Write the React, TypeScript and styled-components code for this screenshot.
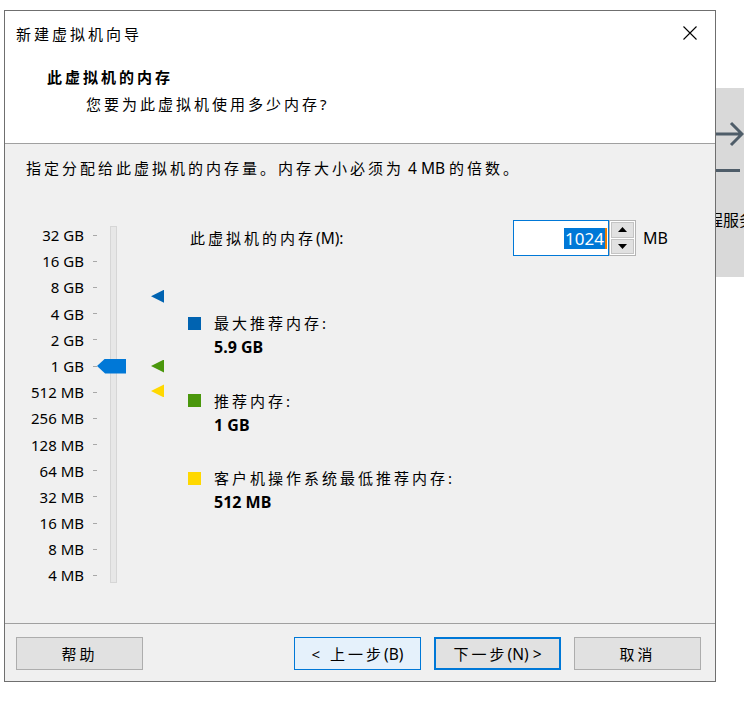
import React from 'react';
import styled, { createGlobalStyle } from 'styled-components';

const GlobalStyle = createGlobalStyle`
  html, body {
    margin: 0;
    padding: 0;
    background: #fff;
  }
  body {
    font-family: "Noto Sans", "Noto Sans CJK SC", sans-serif;
    font-size: 15px;
    color: #000;
  }
`;

const ROW = 26.2;
const SCALE = ['32 GB', '16 GB', '8 GB', '4 GB', '2 GB', '1 GB', '512 MB', '256 MB', '128 MB', '64 MB', '32 MB', '16 MB', '8 MB', '4 MB'];

const markers = [
    { color: '#0063b1', index: 2.33 },
    { color: '#4a970c', index: 5 },
    { color: '#ffd800', index: 5.95 },
];

const legends = [
    { color: '#0063b1', name: '最大推荐内存:', value: '5.9 GB' },
    { color: '#4a970c', name: '推荐内存:', value: '1 GB' },
    { color: '#ffd800', name: '客户机操作系统最低推荐内存:', value: '512 MB' },
];

const rowCenter = (i: number) => ROW / 2 + i * ROW;

export default function App() {
    return (
        <>
            <GlobalStyle />
            <Page>
                <Dialog>
                    <Header>
                        <TitleBar>
                            <Zh>新建虚拟机向导</Zh>
                            <svg width="14" height="14" viewBox="0 0 14 14">
                                <path d="M0.5 0.5 L13.5 13.5 M13.5 0.5 L0.5 13.5" stroke="#000" strokeWidth="1.1" fill="none" />
                            </svg>
                        </TitleBar>
                        <Heading>此虚拟机的内存</Heading>
                        <SubHeading>您要为此虚拟机使用多少内存?</SubHeading>
                    </Header>

                    <Body>
                        <Instruction>
                            指定分配给此虚拟机的内存量。内存大小必须为<Latin> 4 MB </Latin>的倍数。
                        </Instruction>

                        <Main>
                            <ScaleWrap>
                                <LabelCol>
                                    {SCALE.map(s => <ScaleLabel key={s}>{s}</ScaleLabel>)}
                                </LabelCol>
                                <TickCol>
                                    {SCALE.map(s => <TickRow key={s}><Tick /></TickRow>)}
                                </TickCol>
                                <Track />
                                <Thumb style={{ top: rowCenter(5) - 7.5 }} />
                                {markers.map(m => (
                                    <Marker key={m.color} $color={m.color} style={{ top: rowCenter(m.index) - 6.5 }} />
                                ))}
                            </ScaleWrap>

                            <Content>
                                <MemRow>
                                    <MemLabel>此虚拟机的内存<Latin>(M):</Latin></MemLabel>
                                    <SpinInput>
                                        <Selected>1024</Selected>
                                        <Caret />
                                    </SpinInput>
                                    <SpinButtons>
                                        <SpinButton>
                                            <svg width="9" height="5" viewBox="0 0 9 5"><path d="M0 5 L4.5 0 L9 5 Z" fill="#000" /></svg>
                                        </SpinButton>
                                        <SpinButton>
                                            <svg width="9" height="5" viewBox="0 0 9 5"><path d="M0 0 L4.5 5 L9 0 Z" fill="#000" /></svg>
                                        </SpinButton>
                                    </SpinButtons>
                                    <Unit>MB</Unit>
                                </MemRow>

                                <LegendList>
                                    {legends.map(l => (
                                        <LegendItem key={l.name}>
                                            <Swatch $color={l.color} />
                                            <div>
                                                <LegendName>{l.name}</LegendName>
                                                <LegendValue>{l.value}</LegendValue>
                                            </div>
                                        </LegendItem>
                                    ))}
                                </LegendList>
                            </Content>
                        </Main>
                    </Body>

                    <Footer>
                        <Button>帮助</Button>
                        <Spacer />
                        <Button $variant="hover">&lt; 上一步<Latin>(B)</Latin></Button>
                        <Button $variant="primary">下一步<Latin>(N) &gt;</Latin></Button>
                        <Button>取消</Button>
                    </Footer>
                </Dialog>

                <SidePanel>
                    <svg width="28" height="26" viewBox="0 0 28 26">
                        <path d="M0 13 H26 M15 2 L26 13 L15 24" stroke="#4f5d69" strokeWidth="3" fill="none" />
                    </svg>
                    <SideDash />
                    <SideText>程服务</SideText>
                </SidePanel>
            </Page>
        </>
    );
}

const Page = styled.div`
    display: flex;
    align-items: flex-start;
    width: 744px;
    height: 708px;
    padding: 10px 0 0 4px;
    box-sizing: border-box;
    overflow: hidden;
`;

const Dialog = styled.div`
    width: 712px;
    height: 672px;
    flex-shrink: 0;
    box-sizing: border-box;
    border: 1px solid #6f6f6f;
    background: #f0f0f0;
    display: flex;
    flex-direction: column;
`;

const Zh = styled.span`
    letter-spacing: 3px;
`;

const Latin = styled.span`
    letter-spacing: 0;
    font-size: 15.5px;
`;

const Header = styled.div`
    height: 133px;
    box-sizing: border-box;
    background: #fff;
    border-bottom: 1px solid #a0a0a0;
`;

const TitleBar = styled.div`
    height: 44px;
    display: flex;
    align-items: center;
    justify-content: space-between;
    padding: 0 18px 0 11px;
`;

const Heading = styled.div`
    margin: 10px 0 0 42px;
    line-height: 24px;
    font-weight: bold;
    letter-spacing: 3px;
`;

const SubHeading = styled.div`
    margin: 3px 0 0 81px;
    line-height: 24px;
    letter-spacing: 3px;
`;

const Body = styled.div`
    flex: 1;
    display: flex;
    flex-direction: column;
`;

const Instruction = styled.div`
    margin: 14px 0 0 21px;
    line-height: 20px;
    letter-spacing: 3px;
`;

const Main = styled.div`
    display: flex;
    align-items: flex-start;
    margin-top: 42px;
`;

const ScaleWrap = styled.div`
    position: relative;
    display: flex;
    align-items: flex-start;
    width: 183px;
    height: ${ROW * 14}px;
    margin-top: 2px;
    flex-shrink: 0;
`;

const LabelCol = styled.div`
    width: 79px;
    display: flex;
    flex-direction: column;
`;

const ScaleLabel = styled.div`
    height: ${ROW}px;
    line-height: ${ROW}px;
    text-align: right;
    white-space: nowrap;
`;

const TickCol = styled.div`
    width: 4px;
    margin-left: 9px;
    display: flex;
    flex-direction: column;
`;

const TickRow = styled.div`
    height: ${ROW}px;
    display: flex;
    align-items: center;
`;

const Tick = styled.div`
    width: 4px;
    height: 1px;
    background: #a8a8a8;
`;

const Track = styled.div`
    width: 7px;
    height: 357px;
    margin: 4px 0 0 13px;
    box-sizing: border-box;
    background: #e7e7e7;
    border: 1px solid #d6d6d6;
`;

const Thumb = styled.div`
    position: absolute;
    left: 92px;
    width: 29px;
    height: 15px;
    background: #0078d7;
    clip-path: polygon(28% 0, 100% 0, 100% 100%, 28% 100%, 0 50%);
`;

const Marker = styled.div<{ $color: string }>`
    position: absolute;
    left: 146px;
    width: 13px;
    height: 13px;
    background: ${p => p.$color};
    clip-path: polygon(100% 0, 100% 100%, 0 50%);
`;

const Content = styled.div`
    display: flex;
    flex-direction: column;
`;

const MemRow = styled.div`
    display: flex;
    align-items: center;
    height: 36px;
`;

const MemLabel = styled.div`
    width: 325px;
    padding-left: 2px;
    box-sizing: border-box;
    letter-spacing: 3px;
`;

const SpinInput = styled.div`
    width: 96px;
    height: 36px;
    box-sizing: border-box;
    border: 1px solid #0078d7;
    background: #fff;
    display: flex;
    align-items: center;
    justify-content: flex-end;
    padding-right: 1px;
`;

const Selected = styled.span`
    background: #0078d7;
    color: #fff;
    font-size: 17px;
    line-height: 21px;
    padding: 0 1px;
`;

const Caret = styled.span`
    width: 2px;
    height: 21px;
    background: #f07d00;
`;

const SpinButtons = styled.div`
    width: 27px;
    height: 36px;
    box-sizing: border-box;
    border: 1px solid #b4b4b4;
    padding: 1px;
    display: flex;
    flex-direction: column;
    gap: 1px;
    background: #fff;
`;

const SpinButton = styled.div`
    flex: 1;
    display: flex;
    align-items: center;
    justify-content: center;
    background: #e1e1e1;
    border: 1px solid #c4c4c4;
`;

const Unit = styled.span`
    margin-left: 7px;
    font-size: 16px;
`;

const LegendList = styled.div`
    margin-top: 55px;
    display: flex;
    flex-direction: column;
    gap: 29.5px;
`;

const LegendItem = styled.div`
    display: flex;
    align-items: flex-start;
`;

const Swatch = styled.div<{ $color: string }>`
    width: 13px;
    height: 13px;
    margin: 5.5px 13px 0 0;
    flex-shrink: 0;
    background: ${p => p.$color};
`;

const LegendName = styled.div`
    line-height: 24px;
    letter-spacing: 3px;
`;

const LegendValue = styled.div`
    line-height: 24px;
    font-size: 16px;
    font-weight: bold;
`;

const Footer = styled.div`
    height: 58px;
    box-sizing: border-box;
    border-top: 1px solid #a0a0a0;
    padding: 13px 14px 0 11px;
    display: flex;
    align-items: flex-start;
    gap: 13px;
`;

const Spacer = styled.div`
    flex: 1;
`;

const Button = styled.div<{ $variant?: 'hover' | 'primary' }>`
    width: 127px;
    height: 33px;
    box-sizing: border-box;
    display: flex;
    align-items: center;
    justify-content: center;
    letter-spacing: 3px;
    background: ${p => (p.$variant === 'hover' ? '#e5f1fb' : '#e1e1e1')};
    border: ${p => (p.$variant === 'primary' ? '2px solid #0078d7' : p.$variant === 'hover' ? '1px solid #0078d7' : '1px solid #adadad')};
`;

const SidePanel = styled.div`
    width: 28px;
    height: 189px;
    margin-top: 78px;
    flex-shrink: 0;
    background: #d9d9d9;
    overflow: hidden;
    padding-top: 33px;
    box-sizing: border-box;
    display: flex;
    flex-direction: column;
`;

const SideDash = styled.div`
    width: 24px;
    height: 3px;
    margin-top: 22px;
    background: #4f5d69;
`;

const SideText = styled.div`
    margin: 38px 0 0 -9px;
    line-height: 20px;
    font-size: 16px;
    white-space: nowrap;
`;
